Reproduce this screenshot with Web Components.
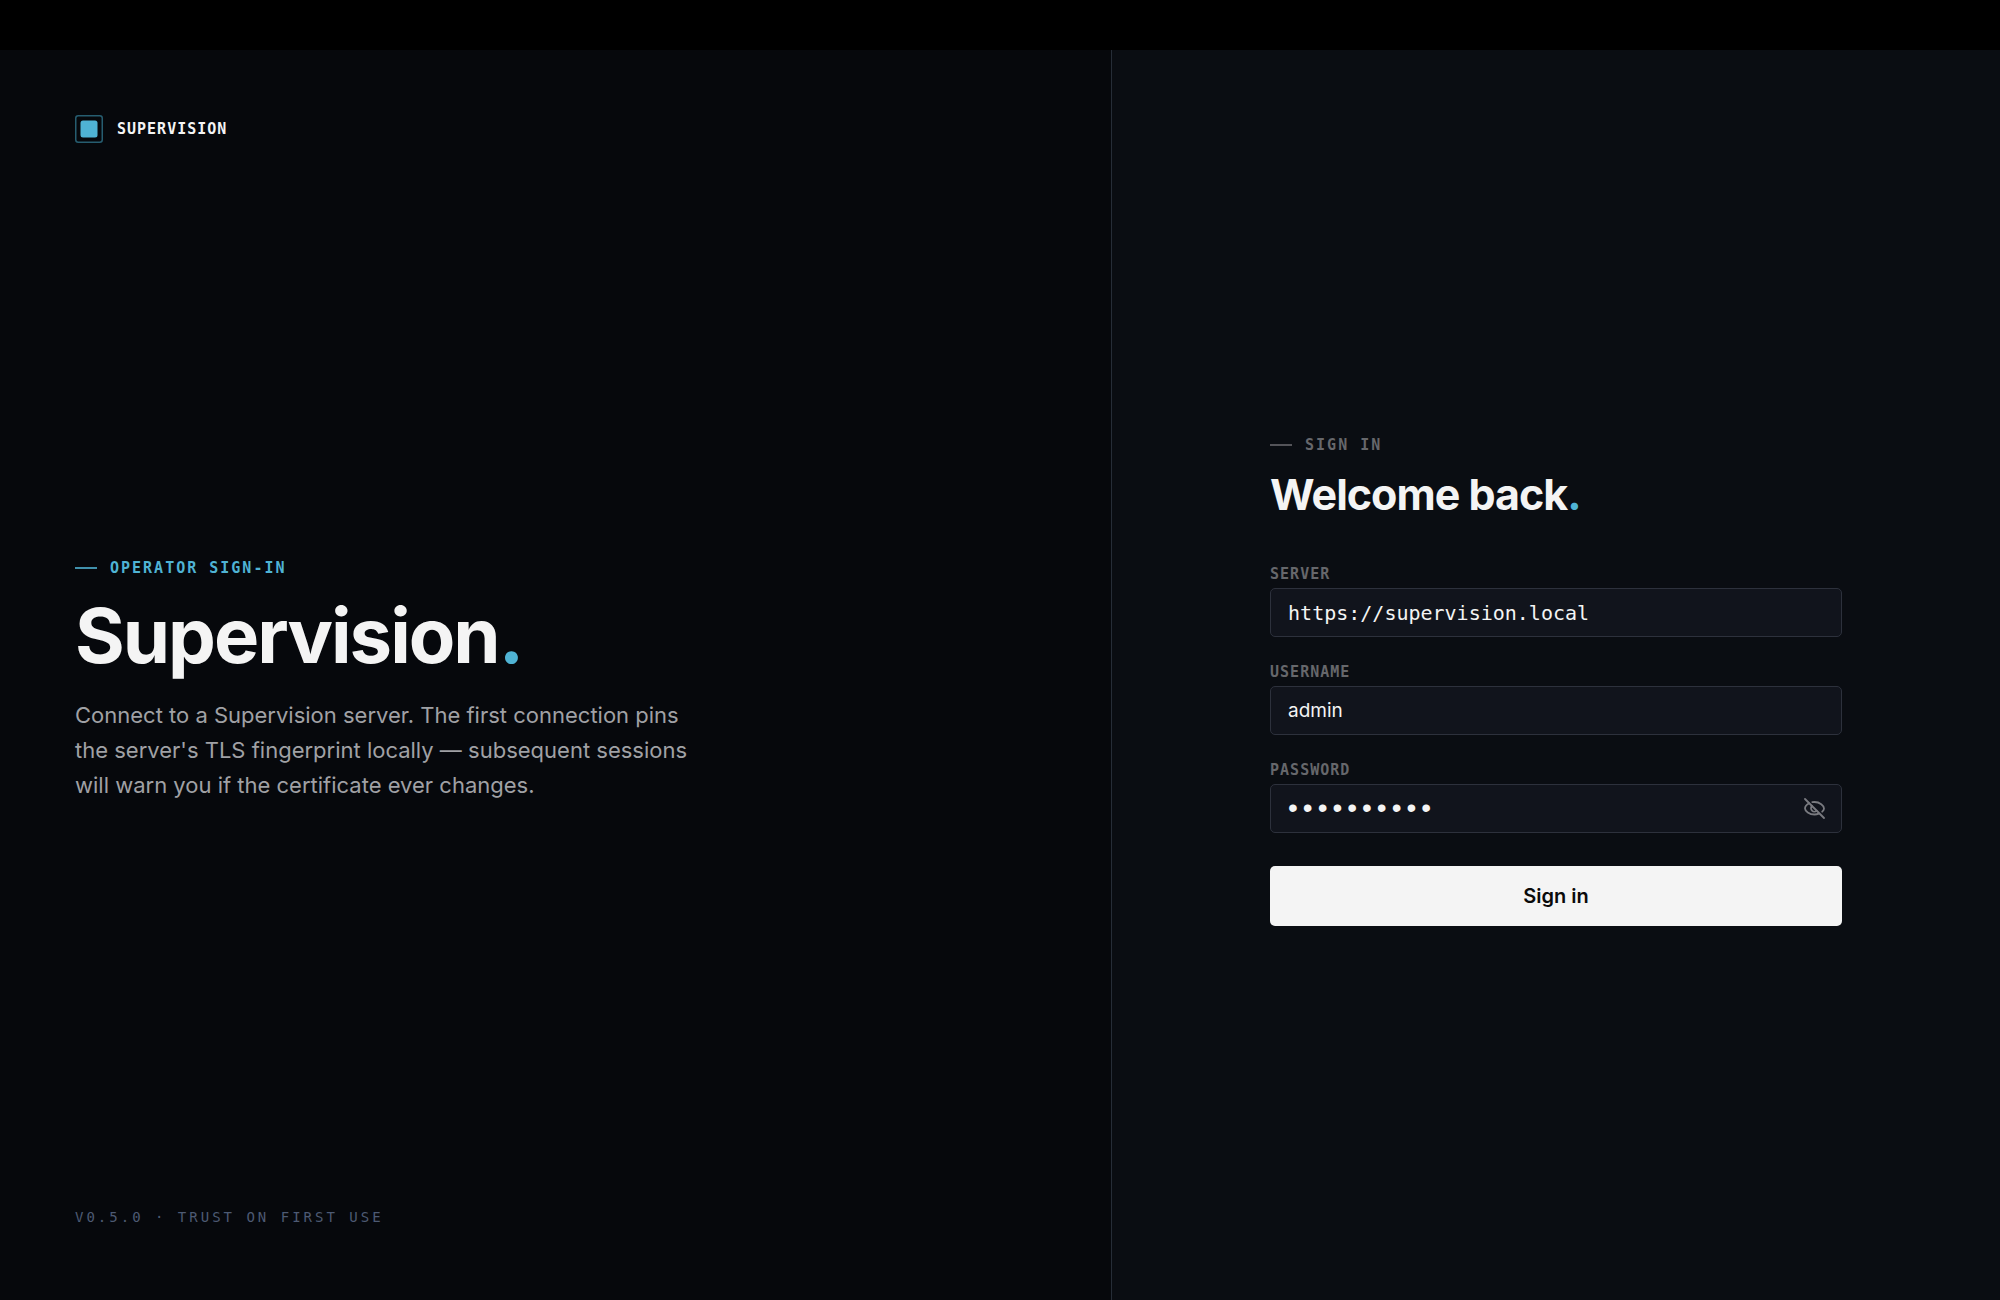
<!DOCTYPE html>
<html lang="en">
<head>
<meta charset="utf-8">
<title>Supervision</title>
<style>
    :root {
        --ink: #06080c;
        --panel: #0a0d12;
        --field: #11141c;
        --line: #2d313c;
        --divider: #262d37;
        --accent: #4fb3d4;
        --white: #f4f4f4;
        --text: #a0a1a5;
        --muted: #66676b;
        --faint: #4d5a73;
        --sans: Inter, "Liberation Sans", sans-serif;
        --mono: "DejaVu Sans Mono", monospace;
    }

    body {
        margin: 0;
        background: var(--ink);
        color: var(--white);
        font-family: var(--sans);
    }
</style>
</head>
<body>
<login-page>
    <brand-mark slot="brand">SUPERVISION</brand-mark>
    <section-heading slot="intro" size="large" eyebrow="OPERATOR SIGN-IN">Supervision</section-heading>
    <span slot="lead">Connect to a Supervision server. The first connection pins the server's TLS fingerprint locally — subsequent sessions will warn you if the certificate ever changes.</span>
    <span slot="footer">V0.5.0 · TRUST ON FIRST USE</span>
    <sign-in-form slot="form"></sign-in-form>
</login-page>

<script>
class LoginPage extends HTMLElement {
    constructor() {
        super();
        this.attachShadow({mode: 'open'});
    }

    connectedCallback() {
        this.shadowRoot.innerHTML = `
            <style>
                *, *::before, *::after { box-sizing: border-box; }

                :host {
                    display: grid;
                    grid-template-rows: 50px 1fr;
                    min-height: 100vh;
                }

                #titlebar { background: #000; }

                main {
                    display: grid;
                    grid-template-columns: 5fr 4fr;
                }

                #intro {
                    display: flex;
                    flex-direction: column;
                    justify-content: space-between;
                    padding: 65px 75px 73px;
                }

                #copy { padding-top: 10px; }

                #lead {
                    color: var(--text);
                    font-size: 22px;
                    line-height: 35px;
                    margin: 23px 0 0;
                    max-width: 620px;
                }

                footer {
                    color: var(--faint);
                    font-family: var(--mono);
                    font-size: 14px;
                    letter-spacing: 3px;
                    line-height: 20px;
                }

                #side {
                    align-items: center;
                    background: var(--panel);
                    border-left: 1px solid var(--divider);
                    display: flex;
                    justify-content: center;
                    padding: 58px 48px 48px;
                }
            </style>
            <div id="titlebar"></div>
            <main>
                <section id="intro">
                    <slot name="brand"></slot>
                    <div id="copy">
                        <slot name="intro"></slot>
                        <p id="lead"><slot name="lead"></slot></p>
                    </div>
                    <footer><slot name="footer"></slot></footer>
                </section>
                <section id="side"><slot name="form"></slot></section>
            </main>
        `;
    }
}

class BrandMark extends HTMLElement {
    constructor() {
        super();
        this.attachShadow({mode: 'open'});
    }

    connectedCallback() {
        this.shadowRoot.innerHTML = `
            <style>
                :host {
                    align-items: center;
                    display: flex;
                    font-family: var(--mono);
                    font-size: 15px;
                    font-weight: 700;
                    gap: 14px;
                    letter-spacing: 1px;
                    line-height: 28px;
                }

                svg { display: block; }
            </style>
            <svg width="28" height="28" viewBox="0 0 28 28" aria-hidden="true">
                <rect x=".75" y=".75" width="26.5" height="26.5" rx="2.5" fill="none" stroke="#265d70" stroke-width="1.5"/>
                <rect x="5.5" y="5.5" width="17" height="17" rx="2.5" fill="#4fb3d4"/>
            </svg>
            <span><slot></slot></span>
        `;
    }
}

class SectionHeading extends HTMLElement {
    constructor() {
        super();
        this.attachShadow({mode: 'open'});
    }

    connectedCallback() {
        const tag = this.getAttribute('size') === 'large' ? 'h1' : 'h2';

        this.shadowRoot.innerHTML = `
            <style>
                :host { display: block; }

                #eyebrow {
                    align-items: center;
                    color: var(--muted);
                    display: flex;
                    font-family: var(--mono);
                    font-size: 15px;
                    font-weight: 700;
                    gap: 13px;
                    letter-spacing: 2px;
                    line-height: 20px;
                    margin: 0;
                }

                #eyebrow::before {
                    background: currentColor;
                    content: '';
                    height: 2px;
                    opacity: 0.8;
                    width: 22px;
                }

                :host([size="large"]) #eyebrow { color: var(--accent); }

                h1, h2 {
                    font-weight: 700;
                    margin: 0;
                }

                h1 {
                    font-size: 76px;
                    letter-spacing: -2px;
                    line-height: 80px;
                    margin-top: 17px;
                }

                h2 {
                    font-size: 43px;
                    letter-spacing: -1px;
                    line-height: 52px;
                    margin-top: 13px;
                }

                #dot { color: var(--accent); }
            </style>
            <p id="eyebrow">${this.getAttribute('eyebrow')}</p>
            <${tag}><slot></slot><span id="dot">.</span></${tag}>
        `;
    }
}

class TextField extends HTMLElement {
    constructor() {
        super();
        this.attachShadow({mode: 'open'});
    }

    connectedCallback() {
        const type = this.getAttribute('type') || 'text';

        this.shadowRoot.innerHTML = `
            <style>
                *, *::before, *::after { box-sizing: border-box; }

                :host { display: block; }

                label {
                    color: var(--muted);
                    display: block;
                    font-family: var(--mono);
                    font-size: 15px;
                    font-weight: 700;
                    letter-spacing: 1px;
                    line-height: 20px;
                    margin-bottom: 4px;
                }

                #box {
                    align-items: center;
                    background: var(--field);
                    border: 1px solid var(--line);
                    border-radius: 5px;
                    display: flex;
                    height: 49px;
                    padding: 0 16px 0 17px;
                }

                #box:focus-within { border-color: var(--accent); }

                input {
                    background: none;
                    border: 0;
                    color: var(--white);
                    flex: 1;
                    font: 19px/28px var(--sans);
                    min-width: 0;
                    outline: 0;
                    padding: 2px 0 0;
                }

                :host([mono]) input { font: 20px/28px var(--mono); }

                input[type="password"] {
                    font: 28px/28px "Liberation Sans", sans-serif;
                    letter-spacing: 5px;
                    padding: 0;
                }

                button {
                    background: none;
                    border: 0;
                    color: #7a7b80;
                    cursor: pointer;
                    padding: 0;
                }

                svg { display: block; }
            </style>
            <label for="field">${this.getAttribute('label')}</label>
            <div id="box">
                <input id="field" type="${type}" value="${this.getAttribute('value')}" spellcheck="false">
                ${type === 'password' ? this.toggle() : ''}
            </div>
        `;

        const button = this.shadowRoot.querySelector('button');
        if (button) {
            button.addEventListener('click', () => {
                const input = this.shadowRoot.querySelector('input');
                input.type = input.type === 'password' ? 'text' : 'password';
            });
        }
    }

    toggle() {
        return `
            <button type="button" aria-label="Show password">
                <svg width="21" height="21" viewBox="0 0 21 21" fill="none" stroke="currentColor" stroke-width="1.8" stroke-linecap="round">
                    <path d="M1 1l19 19"/>
                    <path d="M5.2 5.2C3.2 6.2 1 8.2 1 10.5c0 2.500 4.200 6 9.500 6 1.600 0 3-.3 4.300-.8"/>
                    <path d="M8.300 4.200c.7-.1 1.400-.2 2.200-.2 5.300 0 9.500 3.600 9.500 6.500 0 1.100-.7 2.200-1.800 3.200"/>
                    <path d="M8 8a3.200 3.200 0 0 0 4.700 4.700"/>
                </svg>
            </button>
        `;
    }
}

class SignInForm extends HTMLElement {
    constructor() {
        super();
        this.attachShadow({mode: 'open'});
    }

    connectedCallback() {
        this.shadowRoot.innerHTML = `
            <style>
                :host {
                    display: block;
                    flex: 1;
                    max-width: 572px;
                }

                form {
                    display: flex;
                    flex-direction: column;
                    gap: 25px;
                }

                section-heading { margin-bottom: 19px; }

                #submit {
                    background: var(--white);
                    border: 0;
                    border-radius: 5px;
                    color: #0a0a0a;
                    cursor: pointer;
                    font: 600 20px/28px var(--sans);
                    margin-top: 8px;
                    padding: 16px;
                }
            </style>
            <form>
                <section-heading eyebrow="SIGN IN">Welcome back</section-heading>
                <text-field mono label="SERVER" value="https://supervision.local"></text-field>
                <text-field label="USERNAME" value="admin"></text-field>
                <text-field type="password" label="PASSWORD" value="supervisor"></text-field>
                <button id="submit" type="submit">Sign in</button>
            </form>
        `;

        this.shadowRoot.querySelector('form').addEventListener('submit', (e) => e.preventDefault());
    }
}

customElements.define('login-page', LoginPage);
customElements.define('brand-mark', BrandMark);
customElements.define('section-heading', SectionHeading);
customElements.define('text-field', TextField);
customElements.define('sign-in-form', SignInForm);
</script>
</body>
</html>
